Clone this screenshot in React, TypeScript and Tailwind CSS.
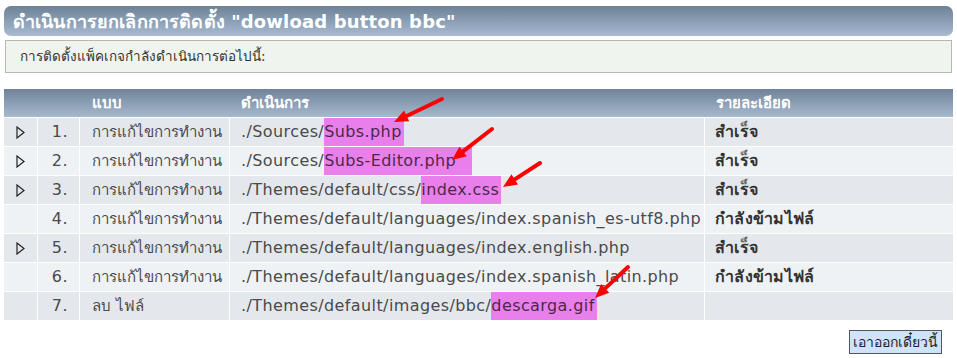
import React from 'react';

const ROWS = [
  { n: '1.', type: 'การแก้ไขการทำงาน', path: './Sources/', hi: 'Subs.php', pad: 0, status: 'สำเร็จ', arrow: true },
  { n: '2.', type: 'การแก้ไขการทำงาน', path: './Sources/', hi: 'Subs-Editor.php', pad: 14, status: 'สำเร็จ', arrow: true },
  { n: '3.', type: 'การแก้ไขการทำงาน', path: './Themes/default/css/', hi: 'index.css', pad: 0, status: 'สำเร็จ', arrow: true },
  { n: '4.', type: 'การแก้ไขการทำงาน', path: './Themes/default/languages/index.spanish_es-utf8.php', hi: '', pad: 0, status: 'กำลังข้ามไฟล์', arrow: false },
  { n: '5.', type: 'การแก้ไขการทำงาน', path: './Themes/default/languages/index.english.php', hi: '', pad: 0, status: 'สำเร็จ', arrow: true },
  { n: '6.', type: 'การแก้ไขการทำงาน', path: './Themes/default/languages/index.spanish_latin.php', hi: '', pad: 0, status: 'กำลังข้ามไฟล์', arrow: false },
  { n: '7.', type: 'ลบ ไฟล์', path: './Themes/default/images/bbc/', hi: 'descarga.gif', pad: 0, status: '', arrow: false },
];

const font = { fontFamily: 'Tahoma, "DejaVu Sans", "Noto Sans", sans-serif' };

// ลูกศรสีแดงที่ชี้ไปยังไฟล์
const RED_ARROWS = [
  [442, 99, 394, 122],
  [492, 129, 452, 160],
  [540, 163, 503, 187],
  [628, 267, 595, 298],
];

const Expand = () => (
  <svg width="9" height="13" viewBox="0 0 9 13">
    <path d="M1 1 L8 6.5 L1 12 Z" fill="none" stroke="#222" strokeWidth="1.2" />
  </svg>
);

export default function App() {
  return (
    <div className="relative w-[957px] h-[358px] bg-white px-[4px] pt-[6px] text-[#4a4a4a]" style={font}>
      <div className="h-[30px] rounded-[7px] bg-gradient-to-b from-[#6d8297] to-[#a9bbd2] flex items-center px-[9px]">
        <span className="text-white font-bold text-[18px] tracking-[0.15px]">ดำเนินการยกเลิกการติดตั้ง "dowload button bbc"</span>
      </div>

      <div className="mt-[4px] mx-[1px] h-[33px] bg-[#f0f4ee] border border-[#b5b8b3] flex items-center px-[14px] text-[13.5px] text-[#333]">
        การติดตั้งแพ็คเกจกำลังดำเนินการต่อไปนี้:
      </div>

      <div className="mt-[16px] flex flex-col gap-[1px]">
        <div className="h-[28px] bg-gradient-to-b from-[#6f8499] to-[#a7b9cf] grid grid-cols-[76px_150px_476px_1fr] items-center text-white font-bold text-[15px]">
          <div></div>
          <div className="pl-[12px]">แบบ</div>
          <div className="pl-[11px]">ดำเนินการ</div>
          <div className="pl-[10px]">รายละเอียด</div>
        </div>
        {ROWS.map((r, i) => (
          <div
            key={r.n}
            className={`h-[28px] grid grid-cols-[34px_41px_149px_474px_1fr] gap-[1px] ${i % 2 === 0 ? 'bg-[#e4e8ed]' : 'bg-[#eef2f5]'}`}
          >
            <div className="flex items-center justify-center border-r border-white">{r.arrow && <Expand />}</div>
            <div className="flex items-center justify-center pl-[2px] border-r border-white text-[16px] tracking-[0.5px]">{r.n}</div>
            <div className="flex items-center pl-[11px] border-r border-white whitespace-nowrap text-[15px]">{r.type}</div>
            <div className="flex items-stretch pl-[10px] border-r border-white whitespace-nowrap text-[16px] tracking-[0.4px]">
              <span className="flex items-center">{r.path}</span>
              {r.hi && (
                <span className="flex items-center bg-[#e97fea] text-[#4a2a4a]" style={{ paddingRight: 2 + r.pad }}>
                  {r.hi}
                </span>
              )}
            </div>
            <div className="flex items-center pl-[9px] font-bold text-[#333] text-[16px] tracking-[0.3px]">{r.status}</div>
          </div>
        ))}
      </div>

      <div className="flex justify-end mt-[10px] pr-[11px]">
        <button className="h-[24px] px-[3px] bg-[#cfe3fb] border border-[#555] text-[14px] text-[#222]">เอาออกเดี๋ยวนี้</button>
      </div>

      <svg className="absolute inset-0 pointer-events-none" width="957" height="358">
        {RED_ARROWS.map(([x1, y1, x2, y2], i) => {
          const a = Math.atan2(y2 - y1, x2 - x1);
          const L = 14;
          const W = 6;
          const bx = x2 - L * Math.cos(a);
          const by = y2 - L * Math.sin(a);
          const px = -Math.sin(a) * W;
          const py = Math.cos(a) * W;
          return (
            <g key={i}>
              <line x1={x1} y1={y1} x2={bx} y2={by} stroke="#f00" strokeWidth="4" strokeLinecap="round" />
              <polygon points={`${x2},${y2} ${bx + px},${by + py} ${bx - px},${by - py}`} fill="#f00" />
            </g>
          );
        })}
      </svg>
    </div>
  );
}
